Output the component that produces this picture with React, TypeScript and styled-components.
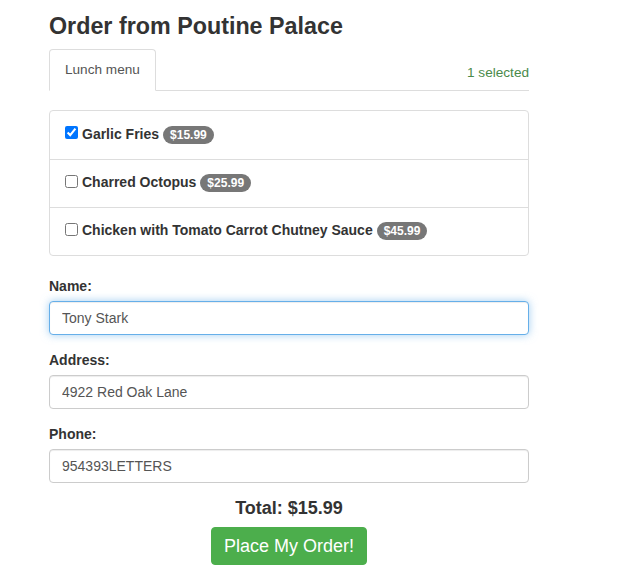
import React from "react";
import styled, { createGlobalStyle } from "styled-components";

const Global = createGlobalStyle`
  html, body { margin: 0; padding: 0; background: #fff; }
  body { font-family: "Liberation Sans", Arial, sans-serif; font-size: 14px; line-height: 1.42857; color: #333; }
  * { box-sizing: border-box; }
`;

const Page = styled.div`
  width: 480px;
  margin-left: 49px;
  padding-top: 14px;
`;

const Title = styled.h3`
  margin: 0 0 10px;
  font-size: 23.3px;
  font-weight: bold;
  line-height: 1.1;
  color: #333;
`;

const TabBar = styled.div`
  display: flex;
  align-items: flex-end;
  justify-content: space-between;
  border-bottom: 1px solid #ddd;
  height: 41px;
`;

const Tab = styled.div`
  padding: 10px 15px;
  line-height: 20px;
  font-size: 13.6px;
  border: 1px solid #ddd;
  border-bottom: 1px solid #fff;
  border-radius: 4px 4px 0 0;
  margin-bottom: -1px;
  color: #555;
  background: #fff;
`;

const Selected = styled.div`
  color: #4a8a4a;
  font-size: 13.6px;
  line-height: 20px;
  padding-bottom: 7px;
`;

const List = styled.div`
  margin-top: 19px;
  border: 1px solid #ddd;
  border-radius: 4px;
  margin-bottom: 20px;
`;

const Item = styled.label<{ $first?: boolean }>`
  display: flex;
  align-items: center;
  height: 48px;
  padding: 0 15px;
  font-weight: bold;
  border-top: ${p => (p.$first ? "none" : "1px solid #ddd")};
`;

const Check = styled.input`
  width: 13px;
  height: 13px;
  margin: 0 4px 0 0;
  position: relative;
  top: -2px;
`;

const Badge = styled.span`
  display: inline-block;
  margin-left: 4px;
  padding: 3px 7px;
  font-size: 12px;
  font-weight: bold;
  line-height: 1;
  color: #fff;
  background: #777;
  border-radius: 10px;
`;

const Group = styled.div`
  margin-bottom: 15px;
`;

const Label = styled.label`
  display: block;
  font-weight: bold;
  margin-bottom: 5px;
  line-height: 20px;
`;

const Input = styled.input<{ $focus?: boolean }>`
  display: block;
  width: 100%;
  height: 34px;
  padding: 6px 12px;
  font-family: "Liberation Sans", Arial, sans-serif;
  font-size: 14px;
  color: #555;
  background: #fff;
  border: 1px solid ${p => (p.$focus ? "#66afe9" : "#ccc")};
  border-radius: 4px;
  outline: none;
  box-shadow: ${p =>
    p.$focus
      ? "inset 0 1px 1px rgba(0,0,0,.075), 0 0 8px rgba(102,175,233,.6)"
      : "inset 0 1px 1px rgba(0,0,0,.075)"};
`;

const Footer = styled.div`
  display: flex;
  flex-direction: column;
  align-items: center;
`;

const Total = styled.div`
  font-size: 18px;
  font-weight: bold;
  line-height: 24px;
  margin-top: -2px;
`;

const Button = styled.button`
  margin-top: 7px;
  padding: 6px 12px;
  font-family: "Liberation Sans", Arial, sans-serif;
  font-size: 18px;
  line-height: 24px;
  color: #fff;
  background: #4cae4c;
  border: 1px solid #4cae4c;
  border-radius: 4px;
  cursor: pointer;
`;

const items = [
  { name: "Garlic Fries", price: "$15.99", checked: true },
  { name: "Charred Octopus", price: "$25.99", checked: false },
  { name: "Chicken with Tomato Carrot Chutney Sauce", price: "$45.99", checked: false },
];

export default function App() {
  return (
    <>
      <Global />
      <Page>
        <Title>Order from Poutine Palace</Title>
        <TabBar>
          <Tab>Lunch menu</Tab>
          <Selected>1 selected</Selected>
        </TabBar>
        <List>
          {items.map((it, i) => (
            <Item key={it.name} $first={i === 0}>
              <Check type="checkbox" defaultChecked={it.checked} />
              {it.name}
              <Badge>{it.price}</Badge>
            </Item>
          ))}
        </List>
        <Group>
          <Label>Name:</Label>
          <Input $focus defaultValue="Tony Stark" />
        </Group>
        <Group>
          <Label>Address:</Label>
          <Input defaultValue="4922 Red Oak Lane" />
        </Group>
        <Group>
          <Label>Phone:</Label>
          <Input defaultValue="954393LETTERS" />
        </Group>
        <Footer>
          <Total>Total: $15.99</Total>
          <Button>Place My Order!</Button>
        </Footer>
      </Page>
    </>
  );
}
